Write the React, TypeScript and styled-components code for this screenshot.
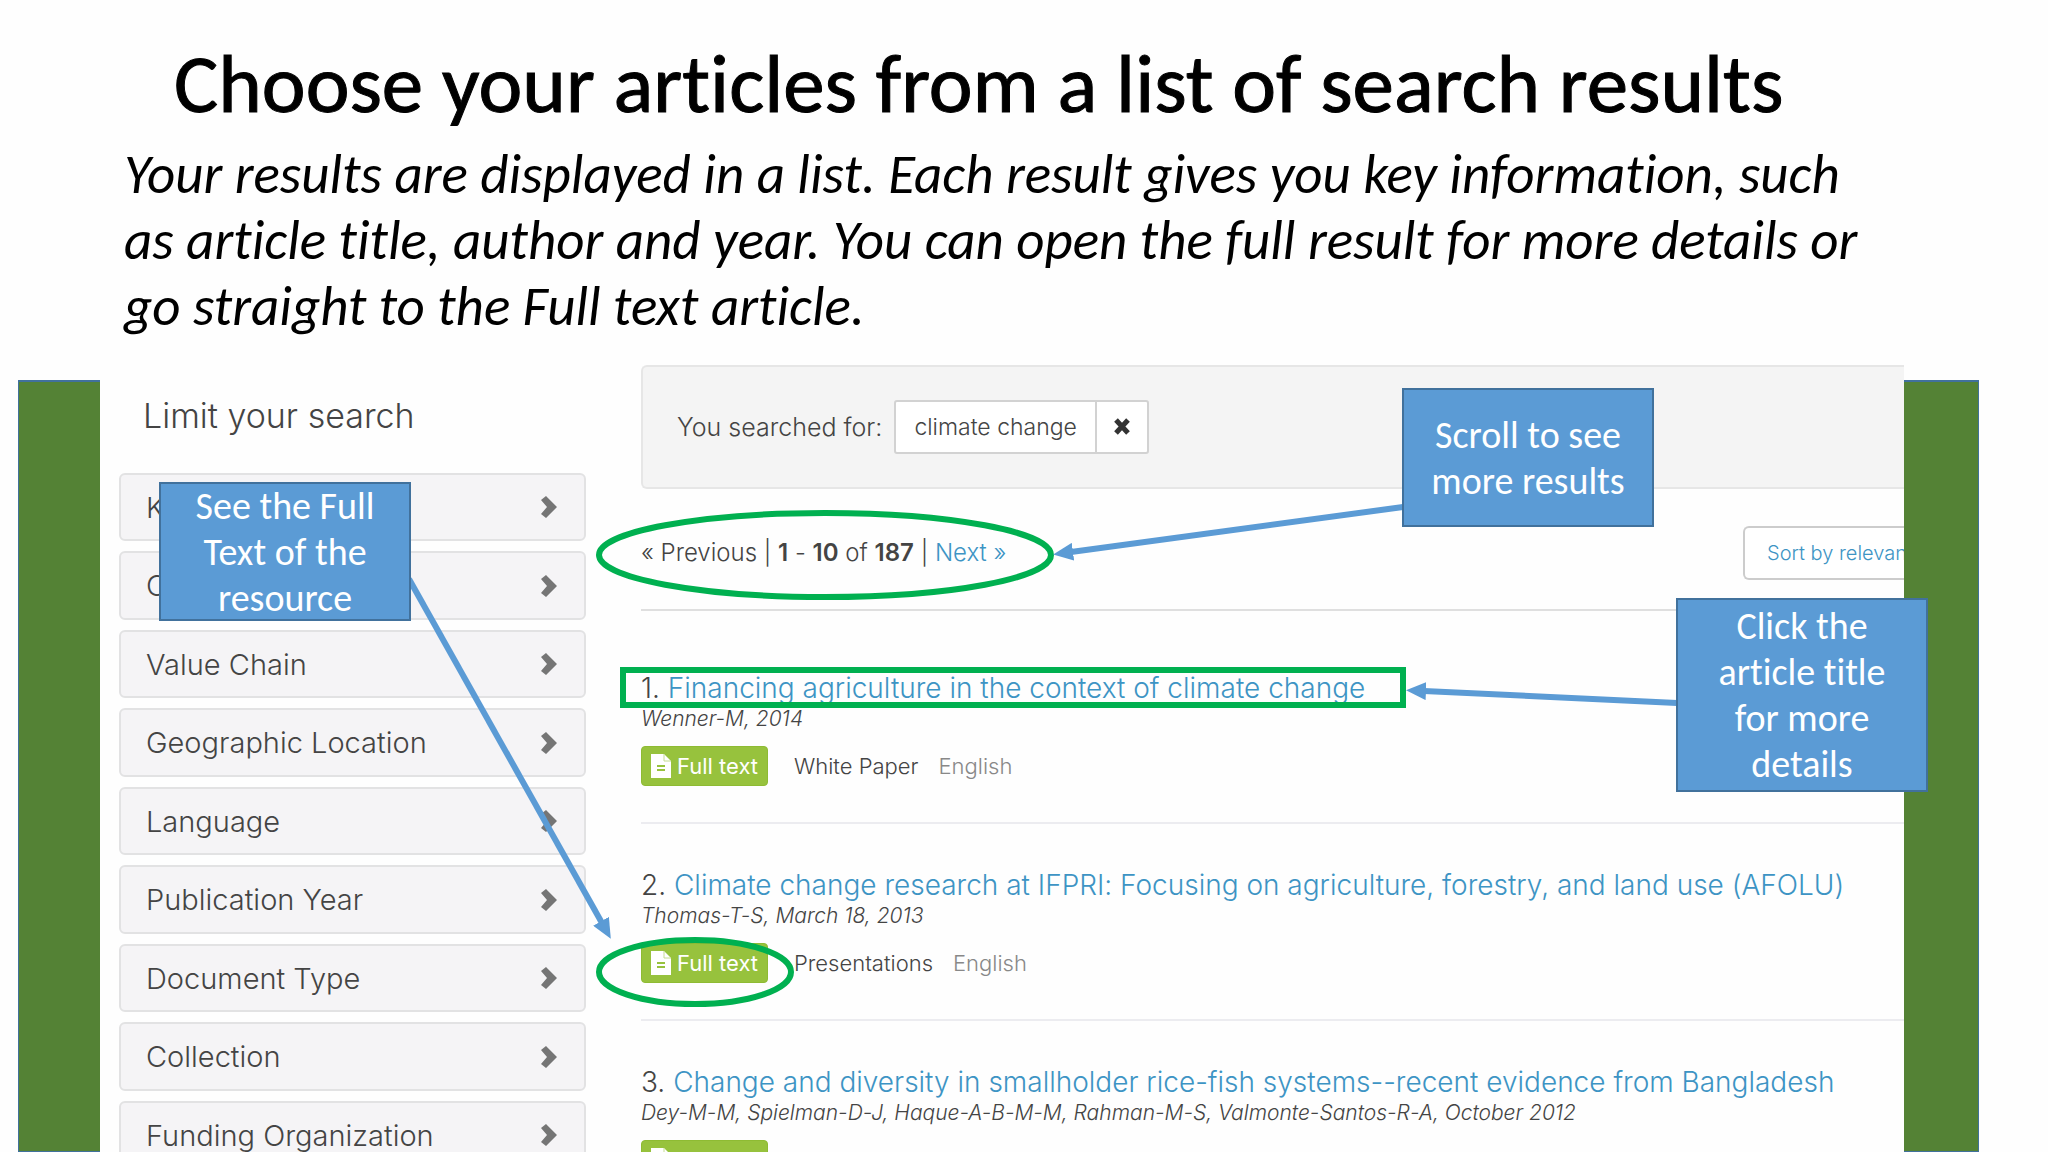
import React from "react";
import styled, { createGlobalStyle } from "styled-components";

const slideFont = `Carlito, Calibri, Lato, sans-serif`;
const siteFont = `Inter, "Open Sans", sans-serif`;

const GlobalStyle = createGlobalStyle`
  *, *::before, *::after { box-sizing: border-box; }
  body { margin: 0; background: #fefefe; overflow: hidden; }
`;

const Slide = styled.main`
  height: 100vh;
  display: flex;
  flex-direction: column;
  overflow: hidden;
  font-family: ${slideFont};
  font-variant-ligatures: none;
  color: #000;
`;

const Header = styled.header`
  padding: 32px 124px 0;
`;

const Heading = styled.h1`
  margin: 0 0 6px;
  padding-left: 50px;
  font-size: 83px;
  line-height: 104px;
  font-weight: 400;
  -webkit-text-stroke: 1px #000;
  white-space: nowrap;
`;

const Lead = styled.p`
  margin: 0;
  font-size: 55px;
  line-height: 66px;
  font-style: italic;
  white-space: nowrap;
`;

const Stage = styled.div`
  position: relative;
  flex: 1;
  min-height: 0;
  margin: 25px 69px 0 18px;
  display: grid;
  grid-template-columns: 82px minmax(0, 1fr) 75px;
`;

const Band = styled.div<{ $side: "left" | "right" }>`
  margin-top: 15px;
  background: #548235;
  border: 1px solid #41719c;
  border-${(p) => (p.$side === "left" ? "right" : "left")}: 0;
  border-top-width: 2px;
`;

const Capture = styled.div`
  display: grid;
  grid-template-columns: 467px minmax(0, 1fr);
  column-gap: 55px;
  padding-left: 19px;
  overflow: hidden;
  font-family: ${siteFont};
  font-weight: 300;
  color: #444;
`;

const Sidebar = styled.aside`
  padding-top: 31px;
`;

const SidebarTitle = styled.h2`
  margin: 0 0 37px;
  padding-left: 24px;
  font-size: 34px;
  line-height: 40px;
  font-weight: 300;
`;

const FacetList = styled.ul`
  margin: 0;
  padding: 0;
  list-style: none;
  display: grid;
  grid-auto-rows: 68px 69px;
  row-gap: 10px;
`;

const FacetButton = styled.button`
  width: 100%;
  height: 100%;
  padding: 0 25px;
  display: flex;
  align-items: center;
  justify-content: space-between;
  border: 2px solid #e2e2e3;
  border-radius: 6px;
  background: #f5f4f6;
  color: #444;
  font-family: inherit;
  font-size: 29px;
  font-weight: 300;
`;

const Results = styled.section`
  min-width: 0;
`;

const SearchBox = styled.div`
  height: 124px;
  padding-left: 34px;
  display: flex;
  align-items: center;
  gap: 12px;
  border: 2px solid #e6e6e6;
  border-right: 0;
  border-radius: 6px 0 0 6px;
  background: #f4f4f4;
  font-size: 25px;
`;

const Chip = styled.span`
  display: flex;
  height: 54px;
  border: 2px solid #d2d2d2;
  border-radius: 3px;
  background: #fff;
  font-size: 23px;
  line-height: 50px;
`;

const ChipLabel = styled.span`
  padding: 0 18px;
`;

const ChipRemove = styled.button`
  width: 52px;
  padding: 0;
  display: grid;
  place-items: center;
  border: 0;
  border-left: 2px solid #d2d2d2;
  background: transparent;
`;

const Toolbar = styled.div`
  height: 122px;
  padding-top: 7px;
  display: flex;
  align-items: center;
  justify-content: space-between;
  border-bottom: 2px solid #dfdfdf;
  font-size: 24px;
`;

const Pager = styled.nav`
  white-space: nowrap;
  b { font-weight: 600; }
`;

const Link = styled.a`
  color: #3d94c4;
  text-decoration: none;
`;

const SortButton = styled.button`
  flex: none;
  width: 161px;
  height: 54px;
  padding: 0 0 0 22px;
  overflow: hidden;
  border: 2px solid #ccc;
  border-right: 0;
  border-radius: 6px 0 0 6px;
  background: #fff;
  color: #3d94c4;
  font-family: inherit;
  font-size: 20px;
  font-weight: 300;
  text-align: left;
  white-space: nowrap;
`;

const ResultList = styled.ol`
  margin: 0;
  padding: 0;
  list-style: none;
`;

const ResultItem = styled.li`
  height: 197px;
  padding-top: 41px;
  display: flex;
  flex-direction: column;
  border-bottom: 2px solid #ececf0;
  white-space: nowrap;

  &:first-child { height: 213px; padding-top: 57px; }
`;

const ResultTitle = styled.h3`
  margin: 0;
  font-size: 28px;
  line-height: 40px;
  font-weight: 300;
`;

const Authors = styled.p`
  margin: 0 0 16px;
  font-size: 21px;
  line-height: 22px;
  font-style: italic;
`;

const MetaRow = styled.div`
  display: flex;
  align-items: center;
  font-size: 22px;
`;

const FullText = styled.button`
  width: 127px;
  height: 40px;
  margin-right: 26px;
  padding: 0;
  display: flex;
  align-items: center;
  justify-content: center;
  gap: 6px;
  border: 1px solid #8ebb33;
  border-radius: 4px;
  background: #97c23d;
  color: #fff;
  font-family: inherit;
  font-size: 22px;
  font-weight: 400;
`;

const Language = styled.span`
  margin-left: 20px;
  color: #888;
`;

const Overlay = styled.svg`
  position: absolute;
  top: 0;
  left: 0;
  width: 100%;
  height: 100%;
  overflow: visible;
  pointer-events: none;
`;

const Callout = styled.div<{ $left: number; $top: number; $height: number }>`
  position: absolute;
  left: ${(p) => p.$left}px;
  top: ${(p) => p.$top}px;
  width: 252px;
  height: ${(p) => p.$height}px;
  padding: 0 24px;
  display: flex;
  align-items: center;
  justify-content: center;
  border: 2px solid #41719c;
  background: #5b9bd5;
  color: #fff;
  font-size: 38px;
  line-height: 46px;
  text-align: center;
`;

const facets = [
  "Keyword",
  "Country",
  "Value Chain",
  "Geographic Location",
  "Language",
  "Publication Year",
  "Document Type",
  "Collection",
  "Funding Organization",
];

const results = [
  {
    title: "Financing agriculture in the context of climate change",
    authors: "Wenner-M, 2014",
    type: "White Paper",
  },
  {
    title: "Climate change research at IFPRI: Focusing on agriculture, forestry, and land use (AFOLU)",
    authors: "Thomas-T-S, March 18, 2013",
    type: "Presentations",
  },
  {
    title: "Change and diversity in smallholder rice-fish systems--recent evidence from Bangladesh",
    authors: "Dey-M-M, Spielman-D-J, Haque-A-B-M-M, Rahman-M-S, Valmonte-Santos-R-A, October 2012",
    type: "Journal Article",
  },
];

const Chevron = () => (
  <svg width="20" height="26" viewBox="0 0 20 26" aria-hidden="true">
    <path d="M2 6 L7 2 L18 13 L7 24 L2 20 L8 13 Z" fill="#757575" />
  </svg>
);

const Cross = () => (
  <svg width="18" height="18" viewBox="0 0 18 18" aria-hidden="true">
    <path d="M3 2 L15 15 M15 2 L3 15" stroke="#333" strokeWidth="5" />
  </svg>
);

const FileIcon = () => (
  <svg width="20" height="24" viewBox="0 0 20 24" aria-hidden="true">
    <path d="M0 0 H13 L20 7 V24 H0 Z" fill="#fff" />
    <path d="M13 0 V7 H20" fill="none" stroke="#c4dc92" strokeWidth="1" />
    <path d="M6 12 H14 M6 16 H14" stroke="#97c23d" strokeWidth="2" />
  </svg>
);

export default function App() {
  return (
    <>
      <GlobalStyle />
      <Slide>
        <Header>
          <Heading>Choose your articles from a list of search results</Heading>
          <Lead>
            Your results are displayed in a list. Each result gives you key information, such
            <br />
            as article title, author and year. You can open the full result for more details or
            <br />
            go straight to the Full text article.
          </Lead>
        </Header>
        <Stage>
          <Band $side="left" />
          <Capture>
            <Sidebar>
              <SidebarTitle>Limit your search</SidebarTitle>
              <FacetList>
                {facets.map((name) => (
                  <li key={name}>
                    <FacetButton type="button">
                      {name}
                      <Chevron />
                    </FacetButton>
                  </li>
                ))}
              </FacetList>
            </Sidebar>
            <Results>
              <SearchBox>
                <span>You searched for:</span>
                <Chip>
                  <ChipLabel>climate change</ChipLabel>
                  <ChipRemove type="button" aria-label="Remove climate change">
                    <Cross />
                  </ChipRemove>
                </Chip>
              </SearchBox>
              <Toolbar>
                <Pager aria-label="Result pages">
                  « Previous | <b>1</b> - <b>10</b> of <b>187</b> | <Link href="#next">Next »</Link>
                </Pager>
                <SortButton type="button">Sort by relevance</SortButton>
              </Toolbar>
              <ResultList>
                {results.map((r, i) => (
                  <ResultItem key={r.title}>
                    <ResultTitle>
                      {i + 1}. <Link href={`#result-${i + 1}`}>{r.title}</Link>
                    </ResultTitle>
                    <Authors>{r.authors}</Authors>
                    <MetaRow>
                      <FullText type="button">
                        <FileIcon />
                        Full text
                      </FullText>
                      <span>{r.type}</span>
                      <Language>English</Language>
                    </MetaRow>
                  </ResultItem>
                ))}
              </ResultList>
            </Results>
          </Capture>
          <Band $side="right" />

          <Overlay aria-hidden="true">
            <defs>
              <marker
                id="arrow"
                markerUnits="userSpaceOnUse"
                markerWidth="20"
                markerHeight="18"
                refX="2"
                refY="9"
                orient="auto"
              >
                <path d="M0 0 L20 9 L0 18 Z" fill="#5b9bd5" />
              </marker>
            </defs>
            <g fill="none" stroke="#00b050" strokeWidth="6">
              <ellipse cx="807" cy="190" rx="226" ry="42" />
              <ellipse cx="677" cy="607" rx="96" ry="32" />
              <rect x="605" y="305" width="780" height="35" />
            </g>
            <g stroke="#5b9bd5" strokeWidth="6">
              <line x1="391" y1="214" x2="584" y2="558" markerEnd="url(#arrow)" />
              <line x1="1385" y1="142" x2="1053" y2="187" markerEnd="url(#arrow)" />
              <line x1="1659" y1="338" x2="1406" y2="326" markerEnd="url(#arrow)" />
            </g>
          </Overlay>
          <Callout $left={141} $top={117} $height={139}>See the Full Text of the resource</Callout>
          <Callout $left={1384} $top={23} $height={139}>Scroll to see more results</Callout>
          <Callout $left={1658} $top={233} $height={194}>Click the article title for more details</Callout>
        </Stage>
      </Slide>
    </>
  );
}
